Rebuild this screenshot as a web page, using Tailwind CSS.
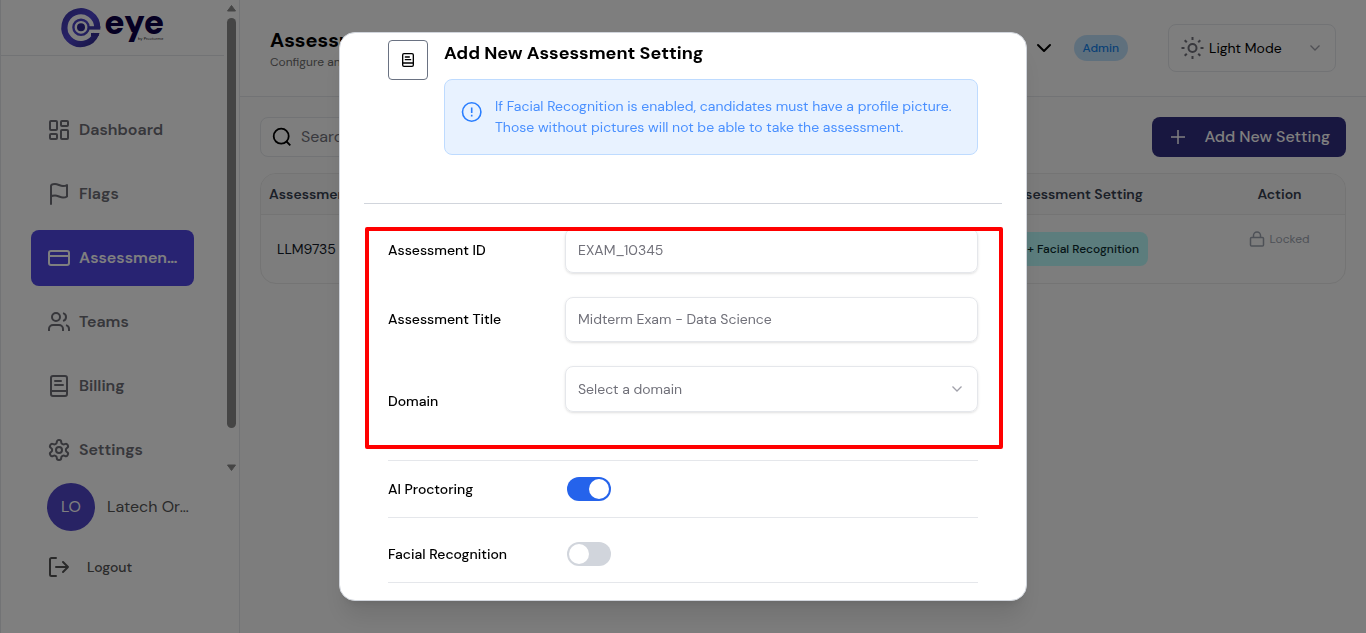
<!DOCTYPE html>
<html lang="en">
<head>
  <meta charset="UTF-8">
  <meta name="viewport" content="width=device-width, initial-scale=1.0">
  <title>Assessment Settings - eye by Proctorme</title>
  <script src="https://cdn.jsdelivr.net/npm/@tailwindcss/browser@4"></script>
  <style>
    body { font-family: 'DM Sans', 'Inter', sans-serif; }
  </style>
</head>
<body class="bg-[#fafafa] h-screen overflow-hidden flex text-black">

<!-- Sidebar -->
<aside class="w-60 shrink-0 bg-white border-x border-gray-200 flex flex-col">
  <div class="flex h-[475px]">
    <div class="flex-1 min-w-0 overflow-hidden">
      <div class="h-14 border-b border-gray-200 flex justify-center">
        <a href="#" title="Home">
          <svg class="w-28 h-14" viewBox="0 0 112 56">
            <defs>
              <linearGradient id="ring" gradientUnits="userSpaceOnUse" x1="4" y1="8" x2="43" y2="47">
                <stop offset="0" stop-color="#3a34a0"/>
                <stop offset=".5" stop-color="#5046d0"/>
                <stop offset="1" stop-color="#2a2480"/>
              </linearGradient>
            </defs>
            <g fill="none" stroke="url(#ring)">
              <path d="M40.200 28A16.400 16.400 0 1 0 39 33.800" stroke-width="6.200"/>
              <circle cx="24" cy="27.300" r="7.600" stroke-width="2.400"/>
            </g>
            <path d="M31 26.200H43.300V29.600H31Z" fill="#3f38ac"/>
            <path d="M34 33H42.500L41.500 36H34Z" fill="#342d96"/>
            <circle cx="24" cy="27.300" r="4" fill="#2c2590"/>
            <text x="47" y="34" font-family="DM Sans" font-weight="900" font-size="34" fill="#0d0047">eye</text>
            <text x="81" y="40" font-family="DM Sans" font-size="4" fill="#222">by Proctorme</text>
          </svg>
        </a>
      </div>
      <nav class="mt-[46px] px-[30px] flex flex-col gap-2 font-semibold text-[#6e6e76]">
        <a href="#" class="h-14 px-4 flex items-center gap-2 rounded-lg shrink-0">
          <svg class="w-6 h-6 shrink-0" viewBox="0 0 24 24" fill="none" stroke="currentColor" stroke-width="2" stroke-linejoin="round"><rect x="3" y="3" width="7" height="9" rx="1"/><rect x="14" y="3" width="7" height="5" rx="1"/><rect x="14" y="12" width="7" height="9" rx="1"/><rect x="3" y="16" width="7" height="5" rx="1"/></svg>
          <span>Dashboard</span>
        </a>
        <a href="#" class="h-14 px-4 flex items-center gap-2 rounded-lg shrink-0">
          <svg class="w-6 h-6 shrink-0" viewBox="0 0 24 24" fill="none" stroke="currentColor" stroke-width="2" stroke-linecap="round" stroke-linejoin="round"><path d="M4 22V4c0-1 1-2 4-2 3 0 5 2 8 2 2.500 0 4-1 4-1v11.500s-1.500 1-4 1c-3 0-5-2-8-2s-4 1-4 1"/></svg>
          <span>Flags</span>
        </a>
        <a href="#" class="h-14 px-4 flex items-center gap-2 rounded-lg shrink-0 bg-[#5046e5] text-white">
          <svg class="w-6 h-6 shrink-0" viewBox="0 0 24 24" fill="none" stroke="currentColor" stroke-width="2"><rect x="2" y="5" width="20" height="14" rx="2"/><path d="M2 10h20"/></svg>
          <span class="truncate">Assessment Settings</span>
        </a>
        <a href="#" class="h-14 px-4 flex items-center gap-2 rounded-lg shrink-0">
          <svg class="w-6 h-6 shrink-0" viewBox="0 0 24 24" fill="none" stroke="currentColor" stroke-width="2" stroke-linejoin="round"><path d="M16 21v-2a4 4 0 0 0-4-4H6a4 4 0 0 0-4 4v2"/><circle cx="9" cy="7" r="4"/><path d="M22 21v-2a4 4 0 0 0-3-3.870M16 3.130a4 4 0 0 1 0 7.750"/></svg>
          <span>Teams</span>
        </a>
        <a href="#" class="h-14 px-4 flex items-center gap-2 rounded-lg shrink-0">
          <svg class="w-6 h-6 shrink-0" viewBox="0 0 24 24" fill="none" stroke="currentColor" stroke-width="2" stroke-linecap="round" stroke-linejoin="round"><rect x="4" y="2" width="16" height="20" rx="2"/><path d="M4 17h16M8 7h6M8 11h8"/></svg>
          <span>Billing</span>
        </a>
        <a href="#" class="h-14 px-4 flex items-center gap-2 rounded-lg shrink-0">
          <svg class="w-6 h-6 shrink-0" viewBox="0 0 24 24" fill="none" stroke="currentColor" stroke-width="2" stroke-linecap="round" stroke-linejoin="round"><path d="M12.220 2h-.44a2 2 0 0 0-2 2v.18a2 2 0 0 1-1 1.730l-.43.25a2 2 0 0 1-2 0l-.15-.08a2 2 0 0 0-2.730.73l-.22.38a2 2 0 0 0 .73 2.730l.15.1a2 2 0 0 1 1 1.720v.51a2 2 0 0 1-1 1.740l-.15.09a2 2 0 0 0-.73 2.730l.22.38a2 2 0 0 0 2.730.73l.15-.08a2 2 0 0 1 2 0l.43.25a2 2 0 0 1 1 1.730V20a2 2 0 0 0 2 2h.44a2 2 0 0 0 2-2v-.18a2 2 0 0 1 1-1.730l.43-.25a2 2 0 0 1 2 0l.15.08a2 2 0 0 0 2.730-.73l.22-.39a2 2 0 0 0-.73-2.730l-.15-.08a2 2 0 0 1-1-1.740v-.5a2 2 0 0 1 1-1.740l.15-.09a2 2 0 0 0 .73-2.730l-.22-.38a2 2 0 0 0-2.730-.73l-.15.08a2 2 0 0 1-2 0l-.43-.25a2 2 0 0 1-1-1.730V4a2 2 0 0 0-2-2z"/><circle cx="12" cy="12" r="3"/></svg>
          <span>Settings</span>
        </a>
      </nav>
    </div>
    <!-- Scrollbar -->
    <div class="w-[15px] shrink-0 flex flex-col items-center py-1 text-[#8b8b8b]">
      <svg class="w-[9px] h-2" viewBox="0 0 9 8" fill="currentColor"><path d="M4.500 1.500 8.500 7H.5Z" stroke="currentColor" stroke-linejoin="round"/></svg>
      <div class="w-[9px] h-[410px] mt-[6px] rounded-full bg-[#8b8b8b]"></div>
      <svg class="w-[9px] h-2 mt-auto" viewBox="0 0 9 8" fill="currentColor"><path d="M4.500 7.500 8.500 2H.5Z" stroke="currentColor" stroke-linejoin="round"/></svg>
    </div>
  </div>

  <div class="mt-2 pl-[46px] pr-12 flex items-center gap-3">
    <div class="w-12 h-12 shrink-0 rounded-full bg-[#5046c8] text-white flex items-center justify-center">LO</div>
    <p class="truncate text-[#545454]">Latech Organization</p>
  </div>
  <button class="mt-6 ml-[46px] flex items-center gap-4 text-sm font-medium text-[#545454]">
    <svg class="w-6 h-6" viewBox="0 0 24 24" fill="none" stroke="currentColor" stroke-width="2" stroke-linecap="round" stroke-linejoin="round"><path d="M9 3H4.500A1.500 1.500 0 0 0 3 4.500v15A1.500 1.500 0 0 0 4.500 21H9M9 12H21M16 7l5 5-5 5"/></svg>
    Logout
  </button>
</aside>

<!-- Main -->
<div class="flex-1 min-w-0">
  <header class="h-[97px] border-b border-gray-200 px-[30px] flex bg-white/40">
    <div class="pt-7">
      <h1 class="text-xl font-bold leading-6">Assessment Settings</h1>
      <p class="mt-[2px] text-xs leading-4 text-[#6b6b6b]">Configure and manage assessment settings</p>
    </div>
    <div class="ml-auto h-[96px] flex items-center">
      <button title="Organization" class="mr-[22px]">
        <svg class="w-4 h-4" viewBox="0 0 16 16" fill="none" stroke="currentColor" stroke-width="2" stroke-linecap="round" stroke-linejoin="round"><path d="m2 5 6 6 6-6"/></svg>
      </button>
      <span class="mr-10 h-[26px] px-[9px] rounded-full bg-[#bfe0fb] text-[#1180ec] text-xs font-medium flex items-center">Admin</span>
      <div class="relative w-[168px]">
        <svg class="absolute left-3 top-3 w-6 h-6 text-[#71717a] pointer-events-none" viewBox="0 0 24 24" fill="none" stroke="currentColor" stroke-width="2"><circle cx="12.500" cy="12" r="4"/><path d="M12.500 1v3M12.500 20v3M4.700 4.200l2.100 2.100M18.200 17.700l2.100 2.100M1.500 12h3M20.500 12h3M4.700 19.800l2.100-2.100M18.200 6.300l2.100-2.100"/></svg>
        <select aria-label="Theme" class="appearance-none w-full h-12 pl-10 pr-8 rounded-lg border border-gray-200 text-sm">
          <option>Light Mode</option>
          <option>Dark Mode</option>
        </select>
        <svg class="absolute right-4 top-[19px] w-[10px] h-[10px] text-[#a1a1aa] pointer-events-none" viewBox="0 0 10 10" fill="none" stroke="currentColor" stroke-width="1.300"><path d="m.5 2.500 4.500 4.500 4.500-4.500"/></svg>
      </div>
    </div>
  </header>

  <main class="p-5">
    <div class="flex justify-between">
      <label class="w-80 h-10 px-2 rounded-lg border border-gray-200 bg-white/40 flex items-center gap-2">
        <svg class="w-6 h-6 shrink-0" viewBox="0 0 24 24" fill="none" stroke="currentColor" stroke-width="1.800"><circle cx="12.200" cy="11.200" r="7.500"/><path d="m17.500 16.500 3.800 3.800"/></svg>
        <input type="text" placeholder="Search..." aria-label="Search" class="flex-1 min-w-0 outline-none placeholder:text-[#71717a]">
      </label>
      <button class="h-10 px-4 rounded-lg bg-[#312e81] text-white font-medium flex items-center gap-4">
        <svg class="w-5 h-5" viewBox="0 0 20 20" fill="none" stroke="currentColor" stroke-width="1.500"><path d="M3 10h14M10 3v14"/></svg>
        Add New Setting
      </button>
    </div>

    <div class="mt-4 rounded-2xl border border-[#e8e8e8] overflow-hidden">
      <table class="w-full">
        <thead class="bg-[#f6f6f6] text-sm text-[#374151]">
          <tr class="h-10 border-b border-[#e8e8e8]">
            <th class="pl-2 text-left font-semibold">Assessment ID</th>
            <th class="pr-[71px] text-right font-semibold">Assessment Setting</th>
            <th class="w-[131px] font-semibold">Action</th>
          </tr>
        </thead>
        <tbody>
          <tr class="h-[69px]">
            <td class="pl-4 text-sm text-[#111827]">LLM9735</td>
            <td class="pr-[66px] text-right"><span class="inline-flex h-[34px] items-center px-[9px] rounded-lg bg-[#b8fbfb] text-xs font-medium text-[#0b2b2f]">AI Proctoring + Facial Recognition</span></td>
            <td class="pt-4 align-top">
              <button disabled class="mx-auto flex items-center gap-1 text-xs text-[#9ca3af]">
                <svg class="w-4 h-4" viewBox="0 0 16 16" fill="none" stroke="currentColor" stroke-width="1.500"><rect x="1.500" y="6.500" width="13" height="8.500" rx="1"/><path d="M4.500 6.500V4.500a3.500 3.500 0 0 1 7 0v2"/></svg>
                Locked
              </button>
            </td>
          </tr>
        </tbody>
      </table>
    </div>
  </main>
</div>

<!-- Modal -->
<div class="fixed inset-0 z-50 bg-black/50 flex items-center justify-center">
  <div role="dialog" aria-labelledby="modalTitle" class="w-full max-w-[688px] h-[90vh] overflow-hidden bg-white rounded-2xl border border-gray-300 shadow-xl px-6 text-sm">
    <div class="px-6 pt-[7px] pb-12 flex gap-4 border-b border-gray-300">
      <div class="w-10 h-10 shrink-0 rounded border border-gray-500 flex items-center justify-center">
        <svg class="w-4 h-4" viewBox="0 0 24 24" fill="none" stroke="currentColor" stroke-width="2" stroke-linecap="round" stroke-linejoin="round"><rect x="4" y="2.500" width="16" height="19" rx="2"/><path d="M4 16.500h16M8 7.500h6M8 11.500h8"/></svg>
      </div>
      <div class="flex-1">
        <h2 id="modalTitle" class="text-lg leading-[27px] font-bold">Add New Assessment Setting</h2>
        <div class="mt-3 h-[76px] px-4 rounded-lg border border-[#bedbff] bg-[#e8f2ff] text-[#4a90ff] flex gap-3">
          <svg class="w-[22px] h-[22px] mt-[21px] shrink-0 text-[#2b7fff]" viewBox="0 0 22 22" fill="none" stroke="currentColor" stroke-width="1.600"><circle cx="10.700" cy="11" r="9.200"/><path d="M10.700 6.500v5.500M10.700 13.800v1.700"/></svg>
          <p class="mt-4 leading-[21px]">If Facial Recognition is enabled, candidates must have a profile picture.<br>Those without pictures will not be able to take the assessment.</p>
        </div>
      </div>
    </div>

    <form class="relative px-6 pt-6">
      <!-- Required fields highlight -->
      <div class="absolute left-px right-[-1px] top-[23px] h-[222px] border-4 border-[#ff0000] rounded-xs pointer-events-none"></div>
      <div class="grid grid-cols-[177px_1fr] gap-y-6 items-center font-medium">
        <label for="examId">Assessment ID</label>
        <input id="examId" type="text" placeholder="EXAM_10345" class="h-[45px] px-3 rounded-lg border border-gray-200 shadow-sm font-normal placeholder:text-[#71717a]">
        <label for="examTitle">Assessment Title</label>
        <input id="examTitle" type="text" placeholder="Midterm Exam - Data Science" class="h-[45px] px-3 rounded-lg border border-gray-200 shadow-sm font-normal placeholder:text-[#71717a]">
        <label for="domain">Domain</label>
        <div class="relative h-[70px]">
          <select id="domain" class="appearance-none w-full h-[46px] px-3 rounded-lg border border-gray-200 shadow-sm font-normal text-[#71717a]">
            <option>Select a domain</option>
          </select>
          <svg class="absolute right-4 top-[18px] w-[10px] h-[10px] text-[#a1a1aa] pointer-events-none" viewBox="0 0 10 10" fill="none" stroke="currentColor" stroke-width="1.300"><path d="m.5 2.500 4.500 4.500 4.500-4.500"/></svg>
        </div>
      </div>

      <div class="mt-6 h-[58px] grid grid-cols-[179px_1fr] items-center border-y border-gray-200 font-medium">
        <label for="aiProctoring">AI Proctoring</label>
        <input id="aiProctoring" type="checkbox" role="switch" checked class="appearance-none w-11 h-6 rounded-full bg-gray-300 checked:bg-[#2563eb] before:block before:w-5 before:h-5 before:m-[2px] before:rounded-full before:bg-white checked:before:ml-[22px]">
      </div>
      <div class="h-[65px] pt-2 grid grid-cols-[179px_1fr] items-center border-b border-gray-200 font-medium">
        <label for="facial">Facial Recognition</label>
        <input id="facial" type="checkbox" role="switch" class="appearance-none w-11 h-6 rounded-full bg-gray-300 checked:bg-[#2563eb] before:block before:w-5 before:h-5 before:m-[2px] before:rounded-full before:bg-white checked:before:ml-[22px]">
      </div>
    </form>
  </div>
</div>

</body>
</html>
